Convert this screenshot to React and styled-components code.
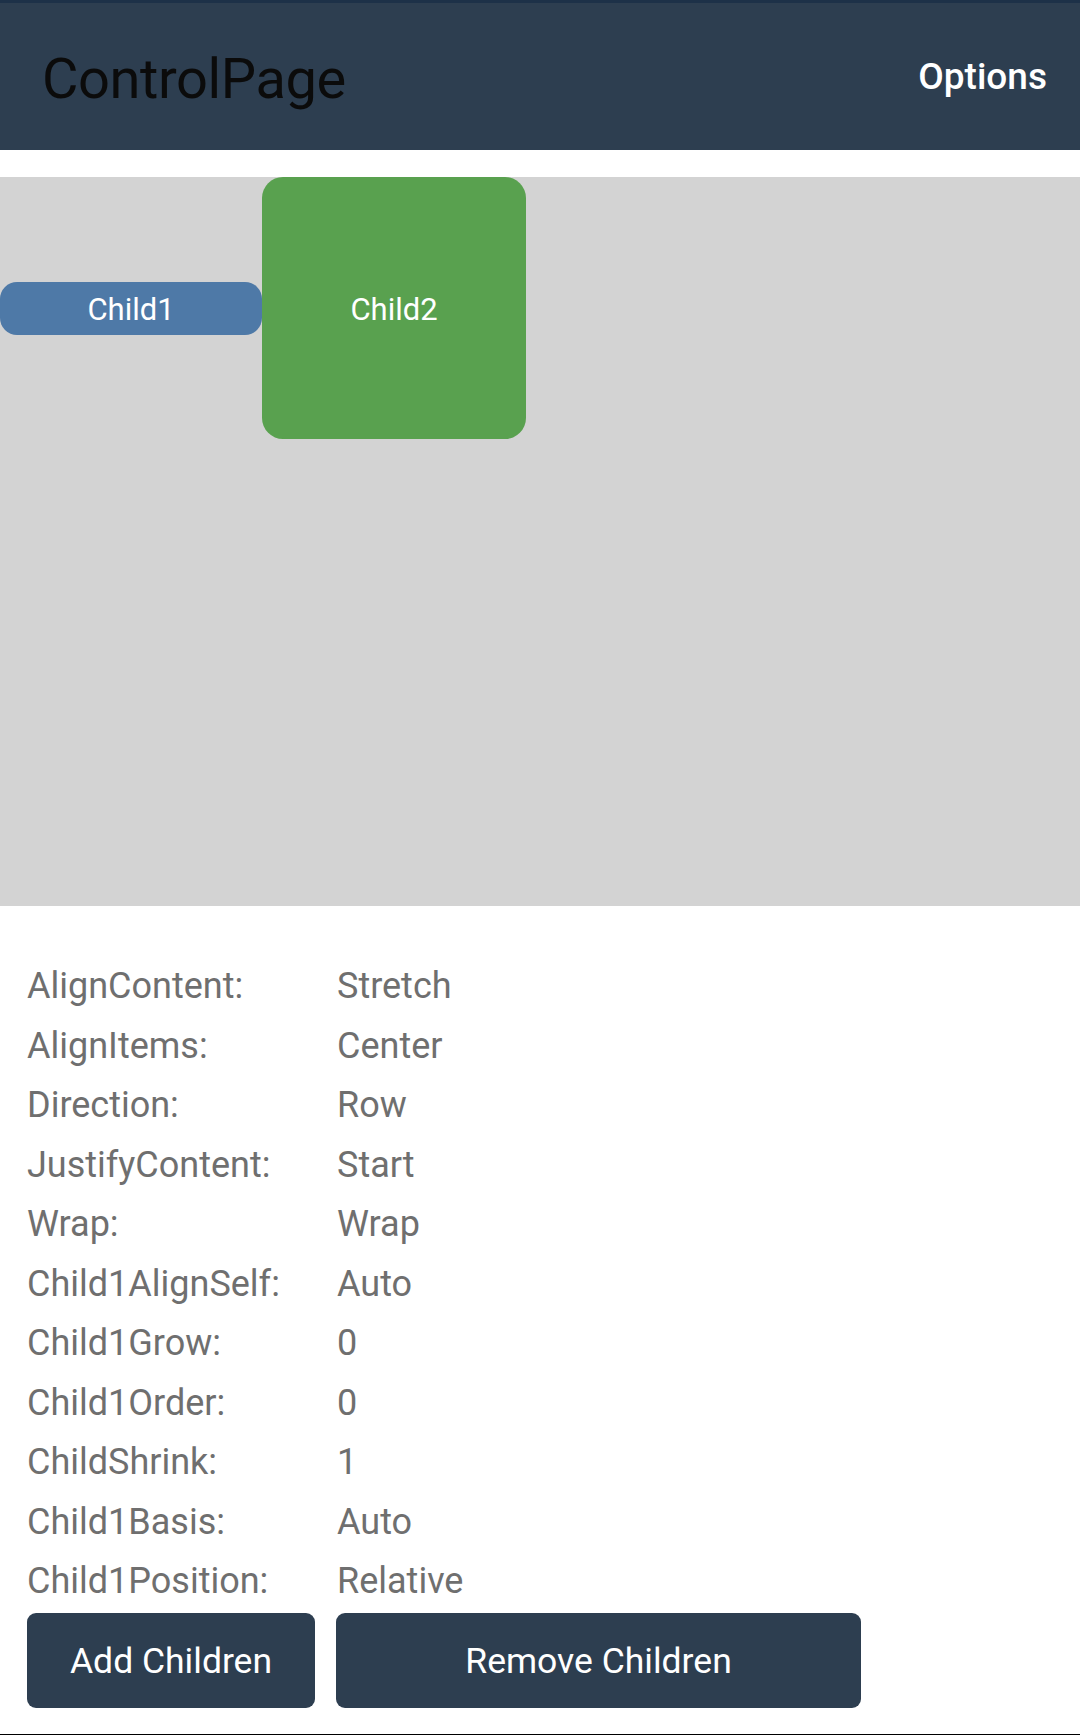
import styled, { createGlobalStyle } from 'styled-components'

const GlobalStyle = createGlobalStyle`
    body {
        margin: 0;
        background: #ffffff;
        font-family: Roboto, "Noto Sans", sans-serif;
    }
    * { box-sizing: border-box; }
`
const Page = styled.div`
    min-height: 1735px;
    display: flex;
    flex-direction: column;
    border-bottom: 1px solid #000;
`
const Header = styled.header`
    height: 150px;
    background-color: #2d3e50;
    border-top: 3px solid #1d3148;
    display: flex;
    align-items: center;
    justify-content: space-between;
    padding: 0 33px 0 42px;
`
const Title = styled.h1`
    margin: 4px 0 0;
    font-size: 56px;
    font-weight: 400;
    color: #0b0b0b;
    letter-spacing: -0.4px;
`
const Options = styled.span`
    font-size: 37px;
    font-weight: 500;
    color: #ffffff;
`
const Stage = styled.div`
    margin-top: 27px;
    height: 729px;
    background-color: #d3d3d3;
    display: flex;
    flex-direction: row;
    flex-wrap: wrap;
    align-items: center;
    align-content: flex-start;
    justify-content: flex-start;
`
const Child = styled.div`
    width: ${props => props.w}px;
    height: ${props => props.h}px;
    border-radius: ${props => props.r}px;
    background-color: ${props => props.color};
    color: #ffffff;
    font-size: 31px;
    padding-top: 2px;
    display: flex;
    align-items: center;
    justify-content: center;
`
const Info = styled.div`
    padding: 51px 0 0 27px;
`
const Grid = styled.div`
    display: grid;
    grid-template-columns: 310px auto;
    line-height: 59.5px;
    font-size: 36px;
    color: #6f6f6f;
`
const Label = styled.span``
const Value = styled.span``
const Buttons = styled.div`
    display: flex;
    gap: 21px;
    margin-top: 1px;
`
const Button = styled.button`
    width: ${props => props.w}px;
    height: 95px;
    border: none;
    border-radius: 9px;
    background-color: #2d3e50;
    color: #ffffff;
    font-family: Roboto, "Noto Sans", sans-serif;
    font-size: 35.5px;
    padding: 2px 0 0;
`

const rows = [
    ['AlignContent:', 'Stretch'],
    ['AlignItems:', 'Center'],
    ['Direction:', 'Row'],
    ['JustifyContent:', 'Start'],
    ['Wrap:', 'Wrap'],
    ['Child1AlignSelf:', 'Auto'],
    ['Child1Grow:', '0'],
    ['Child1Order:', '0'],
    ['ChildShrink:', '1'],
    ['Child1Basis:', 'Auto'],
    ['Child1Position:', 'Relative'],
]

const App = () => {
    return (
        <Page>
            <GlobalStyle />
            <Header>
                <Title>ControlPage</Title>
                <Options>Options</Options>
            </Header>
            <Stage>
                <Child w={262} h={53} r={17} color="#4e79a7">Child1</Child>
                <Child w={264} h={262} r={21} color="#59a14f">Child2</Child>
            </Stage>
            <Info>
                <Grid>
                    {rows.map(([label, value]) => (
                        <>
                            <Label key={label}>{label}</Label>
                            <Value key={label + 'v'}>{value}</Value>
                        </>
                    ))}
                </Grid>
                <Buttons>
                    <Button w={288}>Add Children</Button>
                    <Button w={525}>Remove Children</Button>
                </Buttons>
            </Info>
        </Page>
    )
}

export default App
